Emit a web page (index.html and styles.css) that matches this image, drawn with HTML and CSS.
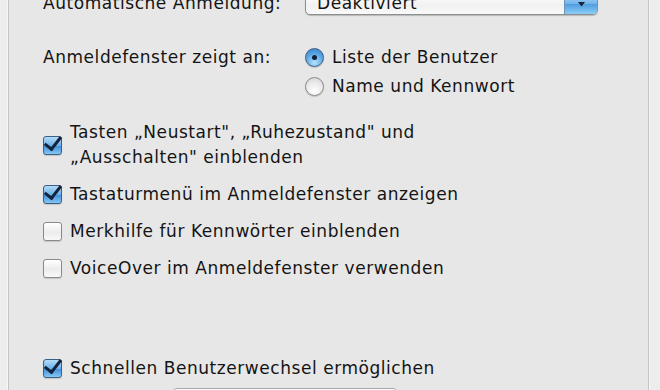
FILE: index.html
```html
<!DOCTYPE html>
<html lang="de">
<head>
<meta charset="utf-8">
<link rel="stylesheet" href="styles.css">
</head>
<body>
<div class="panel">
  <div class="row auto">
    <span class="label">Automatische Anmeldung:</span>
    <div class="popup">
      <span class="popup-text">Deaktiviert</span>
      <span class="popup-btn"><svg width="9" height="6" viewBox="0 0 9 6"><path d="M1 1h7L4.5 5.5z" fill="#14243c"/></svg></span>
    </div>
  </div>

  <div class="row show">
    <span class="label">Anmeldefenster zeigt an:</span>
    <div class="radios">
      <div class="opt"><span class="radio on"></span><span>Liste der Benutzer</span></div>
      <div class="opt"><span class="radio"></span><span>Name und Kennwort</span></div>
    </div>
  </div>

  <div class="checks">
    <div class="check"><span class="box on"></span><span>Tasten „Neustart", „Ruhezustand" und<br>„Ausschalten" einblenden</span></div>
    <div class="check"><span class="box on"></span><span>Tastaturmenü im Anmeldefenster anzeigen</span></div>
    <div class="check"><span class="box"></span><span>Merkhilfe für Kennwörter einblenden</span></div>
    <div class="check"><span class="box"></span><span>VoiceOver im Anmeldefenster verwenden</span></div>
  </div>

  <div class="check fast"><span class="box on"></span><span>Schnellen Benutzerwechsel ermöglichen</span></div>

  <div class="row sub">
    <div class="popup small"></div>
  </div>
</div>
</body>
</html>
```

FILE: styles.css
```css
html, body {
  margin: 0;
  padding: 0;
  background: #ededed;
  overflow: hidden;
}
body {
  width: 660px;
  height: 390px;
  font-family: "DejaVu Sans", "Lucida Grande", sans-serif;
  font-size: 17px;
  letter-spacing: 0.55px;
  color: #141414;
}
.panel {
  margin: -8px 0 0 8px;
  width: 641px;
  height: 420px;
  background: #e7e7e7;
  border-left: 1px solid #c4c4c4;
  border-right: 1px solid #c4c4c4;
  box-shadow: -1px 0 0 #f7f7f7, 1px 0 0 #f7f7f7;
  padding-left: 34px;
  box-sizing: border-box;
}
.row {
  display: flex;
  align-items: flex-start;
}
.label {
  width: 262px;
  flex: none;
  line-height: 30px;
}
.auto {
  height: 23px;
  align-items: center;
}
.auto .label { line-height: 23px; }
.popup {
  position: relative;
  display: flex;
  width: 293px;
  height: 23px;
  box-sizing: border-box;
  border: 1px solid #8e8e8e;
  border-radius: 5px;
  background: linear-gradient(#ffffff, #f1f1f1 60%, #fafafa);
  box-shadow: 0 1px 1px rgba(0,0,0,0.2);
  overflow: hidden;
}
.popup-text {
  flex: 1;
  padding-left: 11px;
  line-height: 21px;
}
.popup-btn {
  width: 32px;
  display: flex;
  align-items: center;
  justify-content: center;
  border-left: 1px solid #6f93b7;
  background: linear-gradient(#b8dcf6, #74b5ea 50%, #4e9be0 52%, #8bcdf6);
}
.show {
  margin-top: 27px;
}
.radios {
  display: flex;
  flex-direction: column;
}
.opt {
  display: flex;
  align-items: center;
  height: 30px;
  gap: 8px;
}
.opt + .opt { height: 28px; }
.radio {
  width: 19px;
  height: 19px;
  box-sizing: border-box;
  border-radius: 50%;
  border: 1px solid #8a8a8a;
  background: radial-gradient(circle at 50% 75%, #ffffff, #e9e9e9 55%, #cfcfcf);
  box-shadow: 0 1px 1px rgba(0,0,0,0.18);
  display: flex;
  align-items: center;
  justify-content: center;
}
.radio.on {
  border-color: #3d5f86;
  background: radial-gradient(circle at 50% 80%, #b6e2fb, #5aa6e4 55%, #2f7dc8);
}
.radio.on::after {
  content: "";
  width: 5px;
  height: 5px;
  border-radius: 50%;
  background: #10213a;
}
.checks {
  margin-top: 20px;
  display: flex;
  flex-direction: column;
  gap: 12px;
}
.check {
  display: flex;
  align-items: center;
  gap: 8px;
  line-height: 25px;
}
.box {
  position: relative;
  flex: none;
  width: 19px;
  height: 19px;
  box-sizing: border-box;
  border: 1px solid #8a8a8a;
  border-radius: 3px;
  background: linear-gradient(#ffffff, #ececec 55%, #f9f9f9);
  box-shadow: 0 1px 1px rgba(0,0,0,0.15);
}
.box.on {
  border-color: #3c5f86;
  background: linear-gradient(#b4dcf7, #6bb0e9 50%, #3f8ddb 52%, #86c7f3);
}
.box.on::after {
  content: "";
  position: absolute;
  left: 4px;
  top: -4px;
  width: 7px;
  height: 14px;
  border-right: 3px solid #14233a;
  border-bottom: 3px solid #14233a;
  transform: rotate(38deg);
  transform-origin: 50% 50%;
}
.fast {
  margin-top: 75px;
}
.sub {
  margin-top: 7px;
  padding-left: 129px;
}
.popup.small {
  width: 226px;
  border-color: #a9a9a9;
}
```
